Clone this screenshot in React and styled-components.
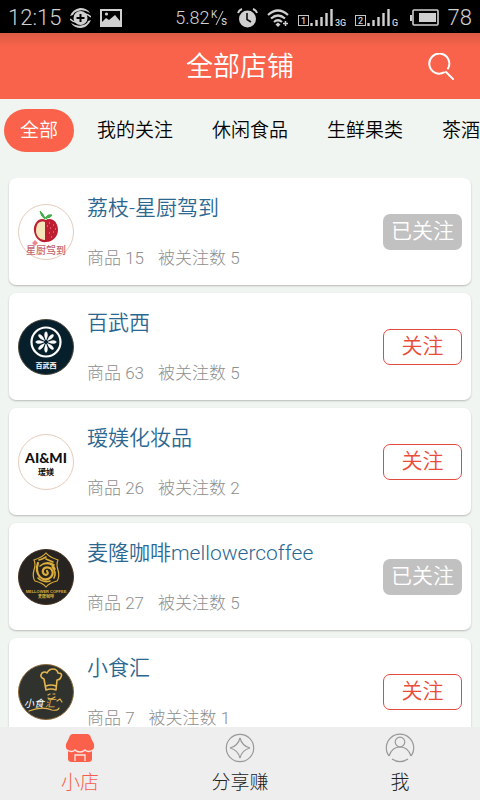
import React, { useState } from "react";
import styled, { createGlobalStyle } from "styled-components";

const GlobalStyle = createGlobalStyle`
  *, *::before, *::after { box-sizing: border-box; }
  body {
    margin: 0;
    background: #f1f5f1;
    font-family: Roboto, "Noto Sans CJK SC", sans-serif;
  }
  button { font: inherit; cursor: pointer; }
`;

const Screen = styled.div`
  display: flex;
  flex-direction: column;
  height: 100vh;
  overflow: hidden;
  background: #f1f5f1;
`;

const StatusBar = styled.div`
  display: flex;
  align-items: center;
  justify-content: space-between;
  flex: none;
  height: 33px;
  padding: 2px 8px 0;
  background: #000;
  color: #d0d0d0;
  font-weight: 300;
`;

const StatusGroup = styled.div`
  display: flex;
  align-items: center;
  gap: 9px;
  svg { display: block; flex: none; }
`;

const Clock = styled.span`
  font-size: 22px;
  line-height: 30px;
`;

const Speed = styled.span`
  display: flex;
  align-items: center;
  gap: 1px;
  font-size: 18px;
  line-height: 30px;
`;

const Header = styled.header`
  display: grid;
  grid-template-columns: 1fr auto 1fr;
  align-items: center;
  flex: none;
  height: 66px;
  padding: 2px 25px 0;
  color: #fff;
  background: linear-gradient(#dc5a43, #f9634b 14px);
`;

const Title = styled.h1`
  grid-column: 2;
  margin: 0;
  font-size: 27px;
  font-weight: 350;
  line-height: 40px;
`;

const SearchButton = styled.button`
  justify-self: end;
  padding: 0;
  border: 0;
  background: none;
  color: #fff;
  svg { display: block; }
`;

const Tabs = styled.nav`
  display: flex;
  flex: none;
  gap: 7px;
  padding: 10px 4px 26px;
  overflow: hidden;
`;

const Tab = styled.button`
  flex: none;
  height: 43px;
  padding: 0 16px;
  border: 0;
  border-radius: 22px;
  background: ${(p) => (p.$active ? "#fb624b" : "transparent")};
  color: ${(p) => (p.$active ? "#fff" : "#050505")};
  font-size: 19px;
  font-weight: 350;
  line-height: 42px;
  white-space: nowrap;
`;

const ShopList = styled.main`
  display: flex;
  flex: 1;
  flex-direction: column;
  gap: 8px;
  min-height: 0;
  padding: 0 9px;
  overflow-y: auto;
  scrollbar-width: none;
`;

const ShopCard = styled.article`
  display: flex;
  align-items: center;
  flex: none;
  gap: 13px;
  padding: 15px 9px;
  border-radius: 7px;
  background: #fff;
  box-shadow: 0 1px 2px rgba(0, 0, 0, 0.24);
`;

const Logo = styled.svg`
  flex: none;
  width: 56px;
  height: 56px;
`;

const ShopInfo = styled.div`
  flex: 1;
  min-width: 0;
`;

const ShopName = styled.h2`
  margin: 0 0 23px;
  color: #2b6891;
  font-size: 21px;
  font-weight: 350;
  line-height: 30px;
  white-space: nowrap;
`;

const ShopMeta = styled.p`
  display: flex;
  gap: 14px;
  margin: 0;
  color: #8e8e8e;
  font-size: 17px;
  font-weight: 300;
  line-height: 24px;
  white-space: nowrap;
`;

const FollowButton = styled.button`
  flex: none;
  width: 79px;
  height: 36px;
  padding: 0 0 2px;
  border: ${(p) => (p.$following ? "0" : "1px solid #e2493f")};
  border-radius: 7px;
  background: ${(p) => (p.$following ? "#c1c1c1" : "#fff")};
  color: ${(p) => (p.$following ? "#fff" : "#ea4c3a")};
  font-size: 21px;
  font-weight: 350;
  line-height: 32px;
`;

const BottomBar = styled.nav`
  display: grid;
  grid-template-columns: repeat(3, 1fr);
  flex: none;
  height: 73px;
  background: #eee;
`;

const BottomItem = styled.button`
  display: flex;
  flex-direction: column;
  align-items: center;
  gap: 6px;
  padding: 6px 0 0;
  border: 0;
  background: none;
  color: ${(p) => (p.$active ? "#f85d47" : "#222")};
  font-size: 19px;
  font-weight: 300;
  line-height: 28px;
  svg { display: block; }
`;

const SyncIcon = () => (
  <svg width="21" height="20" viewBox="0 0 21 20">
    <circle cx="10.5" cy="10" r="7" fill="#d0d0d0" />
    <path d="M0 8Q3 1 10 0Q17 0 20 5Q14 1 8 3Q4 4 3 7ZM21 12Q18 19 11 20Q4 20 1 15Q7 19 13 17Q17 16 18 13Z" fill="#d0d0d0" />
    <path d="M0 11Q3 14 6 14M21 9Q18 6 15 6" fill="none" stroke="#d0d0d0" strokeWidth="1.6" />
    <path d="M10.5 6v8M6.5 10h8" stroke="#000" strokeWidth="2" />
  </svg>
);

const PictureIcon = () => (
  <svg width="22" height="18" viewBox="0 0 22 18">
    <rect x="1" y="1" width="20" height="16" fill="none" stroke="#d0d0d0" strokeWidth="2" />
    <path d="M2 13L6 9L9 11L15 6L20 12V16H2Z" fill="#d0d0d0" />
    <circle cx="6.5" cy="5" r="1.6" fill="#d0d0d0" />
  </svg>
);

const PerSecondIcon = () => (
  <svg width="17" height="18" viewBox="0 0 17 18">
    <g fill="#d0d0d0" fontFamily="Roboto, sans-serif" fontWeight="400">
      <text x="0" y="9" fontSize="10">K</text>
      <text x="10" y="16" fontSize="12">s</text>
    </g>
    <path d="M12 2L5 16" stroke="#d0d0d0" strokeWidth="1" />
  </svg>
);

const AlarmIcon = () => (
  <svg width="21" height="20" viewBox="0 0 21 20">
    <circle cx="10.5" cy="11" r="8.5" fill="#d0d0d0" />
    <path d="M1 5Q2 2 5 1M20 5Q19 2 16 1" fill="none" stroke="#d0d0d0" strokeWidth="2" />
    <path d="M10 5V11.5L14 14" fill="none" stroke="#111" strokeWidth="1.6" />
  </svg>
);

const WifiIcon = () => (
  <svg width="22" height="18" viewBox="0 0 22 18" fill="none" stroke="#d0d0d0" strokeWidth="2.2">
    <path d="M1 6Q11 -3 21 6M4 9.5Q11 3.5 18 9.5M7 13Q11 9.5 15 13" />
    <path d="M11 13.5L13.5 15.5L11 18L8.5 15.5Z" fill="#d0d0d0" stroke="none" />
    <path d="M18.5 12v5M16 14.5h5" strokeWidth="1.5" />
  </svg>
);

const SignalIcon = ({ sim, network, width }) => (
  <svg width={width} height="18" viewBox={`0 0 ${width} 18`}>
    <rect x="0.5" y="6.5" width="10" height="10" fill="none" stroke="#c4c4c4" />
    <g fill="#d0d0d0" fontFamily="Roboto, sans-serif" fontWeight="500">
      <text x="5.5" y="15" fontSize="9" textAnchor="middle">{sim}</text>
      <text x="37" y="17" fontSize="9">{network}</text>
    </g>
    <path d="M13.5 17v-3M18.5 17v-6M23.5 17v-9M28.5 17V4M33.5 17V0" stroke="#d0d0d0" strokeWidth="2.4" />
  </svg>
);

const BatteryIcon = () => (
  <svg width="29" height="17" viewBox="0 0 29 17">
    <rect x="3" y="1" width="25" height="15" rx="1" fill="none" stroke="#d0d0d0" strokeWidth="1.6" />
    <path d="M0 6h2v6H0ZM9 4h17v9H9Z" fill="#d0d0d0" />
  </svg>
);

const SearchIcon = () => (
  <svg width="27" height="28" viewBox="0 0 27 28" fill="none" stroke="currentColor" strokeWidth="2" strokeLinecap="round">
    <path d="M16 19.4A10 10 0 1 1 20 15.5" />
    <path d="M18 19L25 26" />
  </svg>
);

const brush = "\"Noto Sans CJK SC\", sans-serif";

const LycheeLogo = () => (
  <Logo viewBox="0 0 56 56" aria-hidden="true">
    <circle cx="28" cy="28" r="27.5" fill="#fff" stroke="#e5cbbb" />
    <path d="M27 15Q26 10 22 7Q23 13 27 15M28 14Q29 10 34 11Q33 14 28 14M25 13Q28 13 30 16" fill="#43ae49" stroke="#43ae49" strokeWidth="1" />
    <path d="M28 16C21 12 15 20 16 27C17 35 23 39 28 38C35 38 40 32 40 26C40 18 34 13 28 16Z" fill="#be1e32" />
    <path d="M27 18C20 16 18 22 18 27C18 32 22 36 27 36Z" fill="#f4e5bb" />
    <path d="M31 19h1M35 21h1M32 24h1M37 25h1M31 29h1M35 28h1M33 33h1M29 22h1" stroke="#e77079" strokeWidth="1.5" />
    <path d="M14 39L17 36L20 39L17 42Z" fill="#ed8790" />
    <text x="28" y="50" textAnchor="middle" fill="#c4666f" fontSize="10" fontWeight="500" fontFamily={brush}>星厨驾到</text>
  </Logo>
);

const PETALS = [0, 45, 90, 135, 180, 225, 270, 315];

const FlowerLogo = () => (
  <Logo viewBox="0 0 56 56" aria-hidden="true">
    <circle cx="28" cy="28" r="27.5" fill="#071e2b" stroke="#4c473b" />
    <circle cx="28" cy="23" r="14.5" fill="none" stroke="#fff" strokeWidth="2.2" />
    {PETALS.map((a) => (
      <path key={a} d="M28 21Q25.6 16 27 13.5Q28 11.8 29 13.5Q30.4 16 28 21Z" fill="#fff" stroke="#fff" strokeWidth="0.5" transform={`rotate(${a} 28 23)`} />
    ))}
    <text x="28" y="49" textAnchor="middle" fill="#fff" fontSize="7" fontWeight="700" fontFamily={brush}>百武西</text>
  </Logo>
);

const AimiLogo = () => (
  <Logo viewBox="0 0 56 56" aria-hidden="true">
    <circle cx="28" cy="28" r="27.5" fill="#fff" stroke="#e5cbbb" />
    <g fill="#111" textAnchor="middle">
      <text x="28" y="29" fontSize="14" fontWeight="900" fontFamily="Lato, sans-serif">AI&amp;MI</text>
      <text x="28" y="41" fontSize="8" fontWeight="700" fontFamily={brush}>瑷媄</text>
    </g>
  </Logo>
);

const MellowerLogo = () => (
  <Logo viewBox="0 0 56 56" aria-hidden="true">
    <circle cx="28" cy="28" r="27.5" fill="#262320" stroke="#4a3322" />
    <g fill="none" stroke="#dcae3c" strokeLinecap="round">
      <path d="M28 4Q31 8 40 11Q38 15 40 21Q42 28 39 32Q31 34 28 38Q25 34 17 32Q14 28 16 21Q18 15 16 11Q25 8 28 4Z" strokeWidth="1.2" />
      <path d="M20 14Q17 22 22 28Q28 33 33 28Q37 23 32 19Q27 17 25 21Q24 25 28 26Q31 25 29 22" strokeWidth="2.2" />
      <path d="M22 17Q29 11 36 16M25 15Q34 13 37 20M34 18Q39 23 36 29M20 29Q25 34 32 32M28 8Q25 10 21 11M28 10L35 13" strokeWidth="1.6" />
    </g>
    <g fill="#d9aa3d" textAnchor="middle" fontWeight="700">
      <text x="28" y="44" fontSize="4" fontFamily="Liberation Sans, sans-serif">MELLOWER COFFEE</text>
      <text x="28" y="49" fontSize="4" fontFamily={brush}>麦隆咖啡</text>
    </g>
  </Logo>
);

const ChefLogo = () => (
  <Logo viewBox="0 0 56 56" aria-hidden="true">
    <circle cx="28" cy="28" r="27.5" fill="#30322d" stroke="#8d6b3b" />
    <g fill="none" stroke="#e5b650" strokeLinecap="round" strokeLinejoin="round">
      <path d="M26 15Q21 13 24 9Q27 7 29 9Q31 5 35 5Q39 5 40 9Q45 9 43 13Q42 16 39 16L38 26Q33 24 28 26L26 15M28 22Q33 20 38 22" strokeWidth="1.6" />
      <path d="M30 31L32 30M35 30h2M30 34Q33 36 37 33M39 37L42 35L44 38M11 47Q24 42 34 46Q40 47 41 44" strokeWidth="1.2" />
    </g>
    <g fontSize="10" fontStyle="italic" fontFamily={brush}>
      <text x="6" y="43" fill="#fff">小食</text>
      <text x="27" y="43" fill="#e5b650">汇</text>
    </g>
  </Logo>
);

const StoreIcon = () => (
  <svg width="30" height="30" viewBox="0 0 30 30">
    <path d="M8 1H22Q25 1 26 5L29 11Q30 17 25 18H5Q0 17 1 11L4 5Q5 1 8 1Z" fill="#fb604a" />
    <path d="M3 16H27V26Q27 29 23 29H7Q3 29 3 26Z" fill="#fb604a" />
    <path d="M2 17Q7 20 10 17Q12 19 15 19Q18 19 20 17Q23 20 28 17M10 28V22H20V28" fill="none" stroke="#f8e5e1" strokeWidth="1.3" />
  </svg>
);

const StarIcon = () => (
  <svg width="30" height="30" viewBox="0 0 30 30" fill="none" stroke="#999" strokeWidth="1.2">
    <circle cx="15" cy="15" r="13.7" />
    <path d="M15 5Q17 13 25 15Q17 17 15 25Q13 17 5 15Q13 13 15 5Z" />
  </svg>
);

const PersonIcon = () => (
  <svg width="30" height="30" viewBox="0 0 30 30" fill="none" stroke="#999" strokeWidth="1.2">
    <path d="M4 23A13.7 13.7 0 1 1 26 23M7 26.1A13.7 13.7 0 0 0 23 26.1" />
    <circle cx="15" cy="9" r="4.8" />
    <path d="M4 23Q7 14 15 14Q23 14 26 23" />
  </svg>
);

const TABS = ["全部", "我的关注", "休闲食品", "生鲜果类", "茶酒饮料"];

const SHOPS = [
  { name: "荔枝-星厨驾到", goods: 15, fans: 5, following: true, logo: LycheeLogo },
  { name: "百武西", goods: 63, fans: 5, following: false, logo: FlowerLogo },
  { name: "瑷媄化妆品", goods: 26, fans: 2, following: false, logo: AimiLogo },
  { name: "麦隆咖啡mellowercoffee", goods: 27, fans: 5, following: true, logo: MellowerLogo },
  { name: "小食汇", goods: 7, fans: 1, following: false, logo: ChefLogo },
];

const SECTIONS = [
  { label: "小店", icon: StoreIcon },
  { label: "分享赚", icon: StarIcon },
  { label: "我", icon: PersonIcon },
];

function Shop({ shop }) {
  const [following, setFollowing] = useState(shop.following);
  const ShopLogo = shop.logo;
  return (
    <ShopCard>
      <ShopLogo />
      <ShopInfo>
        <ShopName>{shop.name}</ShopName>
        <ShopMeta>
          <span>商品 {shop.goods}</span>
          <span>被关注数 {shop.fans}</span>
        </ShopMeta>
      </ShopInfo>
      <FollowButton type="button" $following={following} onClick={() => setFollowing(!following)}>
        {following ? "已关注" : "关注"}
      </FollowButton>
    </ShopCard>
  );
}

export default function App() {
  const [tab, setTab] = useState(0);
  const [section, setSection] = useState(0);
  return (
    <Screen>
      <GlobalStyle />
      <StatusBar>
        <StatusGroup>
          <Clock>12:15</Clock>
          <SyncIcon />
          <PictureIcon />
        </StatusGroup>
        <StatusGroup>
          <Speed>5.82<PerSecondIcon /></Speed>
          <AlarmIcon />
          <WifiIcon />
          <SignalIcon sim="1" network="3G" width={48} />
          <SignalIcon sim="2" network="G" width={46} />
          <BatteryIcon />
          <Clock>78</Clock>
        </StatusGroup>
      </StatusBar>
      <Header>
        <Title>全部店铺</Title>
        <SearchButton type="button" aria-label="搜索"><SearchIcon /></SearchButton>
      </Header>
      <Tabs>
        {TABS.map((label, i) => (
          <Tab key={label} type="button" $active={i === tab} onClick={() => setTab(i)}>{label}</Tab>
        ))}
      </Tabs>
      <ShopList>
        {SHOPS.map((shop) => <Shop key={shop.name} shop={shop} />)}
      </ShopList>
      <BottomBar>
        {SECTIONS.map(({ label, icon: Icon }, i) => (
          <BottomItem key={label} type="button" $active={i === section} onClick={() => setSection(i)}>
            <Icon />
            {label}
          </BottomItem>
        ))}
      </BottomBar>
    </Screen>
  );
}
